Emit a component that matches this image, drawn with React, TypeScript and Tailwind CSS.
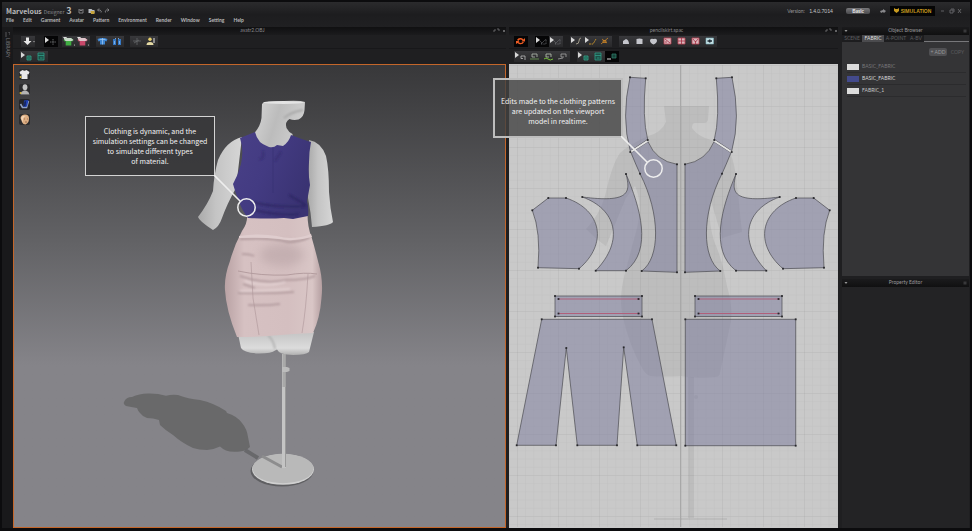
import type { ReactNode } from 'react'

const menus = ['File', 'Edit', 'Garment', 'Avatar', 'Pattern', 'Environment', 'Render', 'Window', 'Setting', 'Help']

const fabrics = [
  { name: 'BASIC_FABRIC', swatch: 'bg-[#dcdcdc]', text: 'text-[#77777a]' },
  { name: 'BASIC_FABRIC', swatch: 'bg-[#434a8c]', text: 'text-[#d4d4d6]' },
  { name: 'FABRIC_1', swatch: 'bg-[#dcdcdc]', text: 'text-[#c4c4c6]' },
]

const arrow = <path d="M1 1v6l4-3z" fill="#d8d8d8" />
const shirt = 'M4 2h1.500q1 1 2 0H9l2.500 2-1.200 1.500L9.300 5v4.500h-5.600V5l-1 .5L1.500 4z'

const icons: Record<string, ReactNode> = {
  down: <><path d="M5 1.500h3V5h2.500L6.500 9 2.500 5H5z" fill="#e8e8e8" /><path d="M12 5h2l-1 1.500z" fill="#999" /></>,
  move: <>{arrow}<path d="M9 3v6M6 6h6" stroke="#77797b" strokeWidth=".8" strokeDasharray="1.500 .7" /></>,
  greenShirt: <><path d="M1 1h4l-2 3z" fill="#ddd" /><path d={shirt} fill="#3fae42" /><path d="M2 3l2-1h5l2.500 2-2 1h-6z" fill="#c9d8c9" /><circle cx="12.500" cy="9" r=".6" fill="#ccc" /></>,
  redShirt: <><path d="M1 1h4l-2 3z" fill="#ddd" /><path d={shirt} fill="#c9486a" /><path d="M2 3l2-1h5l2.500 2-2 1h-6z" fill="#ddc5cb" /><circle cx="12.500" cy="9" r=".6" fill="#ccc" /></>,
  blueShirt: <><path d="M1.500 3l3-1h4l3 1-1 2.500-1.500-.5v3.500h-5V5L2.500 5.500z" fill="#3f86d2" /><path d="M6.500 2v6.500M3.500 3.500h6" stroke="#a5cdf4" strokeWidth=".7" /></>,
  bluePants: <><path d="M3 3h3v6H3zM8 3h3v6H8z" fill="#3578c4" /><path d="M5 2.500h1M8 2.500h1M4.500 5v3M9.500 5v3" stroke="#8fc0f2" strokeWidth=".8" /></>,
  stick: <path d="M3 5h8M7 2v7M4 7l5-3" stroke="#66686a" strokeWidth=".8" fill="none" />,
  avatar: <><circle cx="6" cy="3.200" r="1.700" fill="#e7cf6c" /><path d="M2.500 9q0-3 3.500-3t3.500 3z" fill="#e4d9a4" /><path d="M10 2v5" stroke="#e8e8e8" /></>,
  pinBox: <>{arrow}<path d="M7 5h4v4H7zM8 7h2" stroke="#35a58c" fill="#1d594d" strokeWidth=".8" /></>,
  meshBox: <path d="M4 2h6v7H4zM4 4.500h6M6 7h2.500" stroke="#2f9c86" fill="#1d4f47" strokeWidth=".8" />,
  edit: <>{arrow}<path d="M6 8l5-5v5zM5 5l2 2" stroke="#77797c" fill="none" strokeWidth=".7" strokeDasharray="1 .6" /></>,
  curve: <>{arrow}<path d="M6 8q3 0 3-3t2-3" stroke="#b9b19d" fill="none" strokeWidth=".8" /></>,
  point: <>{arrow}<path d="M5 8h4l3-5" stroke="#bb8a2c" fill="none" strokeWidth="1" strokeDasharray="2 .6" /></>,
  addPoint: <path d="M3 8l7-6M4 3l5 4M5 4.500h3v2H5z" stroke="#ca8427" fill="none" strokeWidth=".8" />,
  polygon: <path d="M4 8V5l3-2q3 1 3 5z" fill="#c5c6cc" />,
  rect: <path d="M3.500 3q3-1 6 0v5h-6z" fill="#c5c6cc" />,
  ellipse: <path d="M6.500 3q3.500-1 3.500 1.500T6.500 8.500Q3 7 3 4.500T6.500 3z" fill="#c5c6cc" />,
  dart: <><path d="M3 2h7v6H3z" fill="#d8b6bc" stroke="#bd4253" strokeWidth=".8" /><path d="M4 3l5 4M4 6h2" stroke="#a62e43" strokeWidth=".8" /></>,
  grid: <><path d="M3 2h7v6H3z" fill="#d8b6bc" stroke="#bd4253" strokeWidth=".8" /><path d="M6.500 2v6M3 5h7" stroke="#a62e43" strokeWidth=".8" /></>,
  cross: <><path d="M3 2h7v6H3z" fill="#d8b6bc" stroke="#bd4253" strokeWidth=".8" /><path d="M4 3l2.500 3L9 3M6.500 5v3" stroke="#a62e43" fill="none" strokeWidth=".8" /></>,
  eye: <><path d="M3 2h7.500v6H3z" fill="#c5e1e6" stroke="#7db0ba" strokeWidth=".6" /><path d="M4.500 5h4.500M6.700 3.500v3" stroke="#1d2a33" strokeWidth="1.600" /></>,
  sewSelect: <>{arrow}<path d="M7 5h4v4M7 5v2.500h2" stroke="#bbb" fill="none" strokeWidth=".8" /></>,
  sewGreen: <><path d="M4 3h5v3M4 3v3h3" stroke="#b5beb2" fill="none" strokeWidth=".8" /><path d="M2 8h9" stroke="#6da054" strokeWidth=".8" /></>,
  sewFree: <><path d="M4 3h5v3M4 3v3h3" stroke="#bcc7b6" fill="none" strokeWidth=".8" /><path d="M2 8q2-2 4 0t5 0" stroke="#75bf39" fill="none" /></>,
  sewOff: <path d="M5 3h5v3M5 3v3h3M2 8l5-1" stroke="#a5a5a5" fill="none" strokeWidth=".8" />,
  layer: <><path d="M2 8h4" stroke="#ddd" /><path d="M7 3h4v4H7z" stroke="#2d7868" fill="#164238" strokeWidth=".8" /></>,
  sync: <path d="M3 4q1-2.500 4-2 1.500.2 2.500 1.500L11 2v3.500H7.500l1-1Q6 2.500 4.500 5zM10 6q-1 2.500-4 2.200-1.500-.2-2.500-1.200L2 8V5h3.500l-1 1Q7 7.800 8.500 6z" fill="#ee5c24" />,
}

function Tool({ icon, label, active }: { icon: string; label: string; active?: boolean }) {
  return (
    <button
      aria-label={label}
      className={`h-[11px] w-[14px] shrink-0 ${active ? 'bg-[#050506]' : 'bg-linear-to-b from-[#38383b] to-[#29292b]'}`}
    >
      <svg viewBox="0 0 14 11" className="block h-full w-full">{icons[icon]}</svg>
    </button>
  )
}

function Group({ tools, active }: { tools: string[]; active?: string }) {
  return (
    <div className="flex">
      {tools.map((t) => (
        <Tool key={t} icon={t} label={t} active={t === active} />
      ))}
    </div>
  )
}

function PaneTitle({ children }: { children: ReactNode }) {
  return (
    <div className="flex h-[8px] items-center bg-linear-to-b from-[#101011] to-[#1b1b1d] text-[5px] text-[#8a8a8c]">
      <span className="flex-1 text-center">{children}</span>
      <svg viewBox="0 0 14 6" className="h-[6px] w-[14px]" fill="none" stroke="#77777a">
        <path d="M2 4V2h2M5 1h2v2M11 2l2 2M13 2l-2 2" strokeWidth=".8" />
      </svg>
    </div>
  )
}

function Callout({ className, children }: { className: string; children: ReactNode }) {
  return (
    <div className={`absolute z-20 flex h-[60px] w-[130px] items-center justify-center text-center font-['Noto_Sans_CJK_SC',sans-serif] text-[7px] leading-[10px] text-[#f4f4f4] ${className}`}>
      <p className="whitespace-nowrap">{children}</p>
      <svg viewBox="0 0 44 44" className="absolute top-full left-full h-[44px] w-[44px]" fill="none" stroke="#eeeeee">
        <path d="M0 0l26 26" strokeWidth="1.600" />
        <circle cx="32.500" cy="32.500" r="8.700" strokeWidth="1.500" />
      </svg>
    </div>
  )
}

function Mannequin() {
  return (
    <svg viewBox="14 65 491 462" className="absolute inset-0 h-full w-full" aria-label="Avatar">
      <defs>
        <linearGradient id="skin" x1="0" x2="1">
          <stop offset="0" stopColor="#aaaaaa" />
          <stop offset=".4" stopColor="#c4c4c4" />
          <stop offset="1" stopColor="#d6d6d6" />
        </linearGradient>
        <linearGradient id="neck" x1="0" x2="1" y2=".3">
          <stop offset="0" stopColor="#d6d6d6" />
          <stop offset=".5" stopColor="#bcbcbc" />
          <stop offset="1" stopColor="#cecece" />
        </linearGradient>
        <linearGradient id="top" x1="0" x2="1" y2=".5">
          <stop offset="0" stopColor="#494087" />
          <stop offset=".5" stopColor="#433b82" />
          <stop offset="1" stopColor="#3a3373" />
        </linearGradient>
        <linearGradient id="skirt" x1="0" x2="1">
          <stop offset="0" stopColor="#b9a2a4" />
          <stop offset=".2" stopColor="#d6c1c2" />
          <stop offset=".65" stopColor="#d4bfc0" />
          <stop offset=".9" stopColor="#d9c6c6" />
          <stop offset="1" stopColor="#b59fa1" />
        </linearGradient>
        <linearGradient id="leg" x1="0" x2="0" y1="0" y2="1">
          <stop offset="0" stopColor="#c4c4c4" />
          <stop offset=".7" stopColor="#dcdcdc" />
          <stop offset="1" stopColor="#b0b0b0" />
        </linearGradient>
        <filter id="soft" x="-20%" y="-50%" width="140%" height="200%">
          <feGaussianBlur stdDeviation="1" />
        </filter>
        <filter id="softer" x="-50%" y="-50%" width="200%" height="200%">
          <feGaussianBlur stdDeviation="5" />
        </filter>
      </defs>

      {/* floor shadow */}
      <path fill="#69696a" d="M124 402q2-5 8-5 8-4 18-3.500 8 0 16 2.200 6-1.500 12-.7 10 4 22 5 14 3 26 11l1 2q10 3 15 10 5 6 6 14l2 10q-4 4-10 4.500-9 1-14-1-4-2-6-4-6 3-13 3.500-8 0-14-2-11-5-20-13-8-5-13-10l-1-5q-6-2-12-2-5-2-7-5-2-2-3-5-6-1-11-2-3-2-2-4z" />
      <ellipse cx="282" cy="471" rx="31.500" ry="15.500" fill="#5f5f62" />
      <path d="M245 450l13 8" stroke="#68686b" strokeWidth="4" />
      <ellipse cx="283" cy="469.500" rx="31" ry="15.300" fill="#d0d0d0" />
      <ellipse cx="283" cy="468.500" rx="30.500" ry="14.700" fill="#b9b9b9" />
      <path d="M262 456l20 11" stroke="#8d8d8e" strokeWidth="3" />
      <path d="M284 354v114" stroke="#c4c4c4" strokeWidth="4" />
      <path d="M285.500 354v113" stroke="#999" strokeWidth="1" />
      <path d="M284 354v33" stroke="#a9a9a9" strokeWidth="3" />
      <path d="M282 367h5l2.500 1v3l-2.500 1h-5z" fill="#bcbcbc" />

      {/* legs */}
      <path fill="url(#leg)" d="M238 334l3 14q3 5 18 5.500 13 0 16-3l2-1q2 5 16 5.500 13 0 16-3l5-20z" />
      <path d="M268 335q6 6 7 14" stroke="#aaa" fill="none" strokeWidth="1.500" filter="url(#soft)" />

      {/* arms and neck */}
      <path fill="url(#skin)" d="M242 137q-16 4-24 23-4 14-5 31-5 13-15 26 1 4 15 13 6-3 9-12 5-14 14-30z" />
      <path fill="url(#skin)" d="M309 140q12 2 17 16 3 13 3 36 1 16 4 30-3 4-21 5-1-14-4-29z" />
      <path fill="url(#neck)" d="M262 104q2-3 22-3 16-1 21 1l-.5 8q-.5 7-6 9.500-5 1-9-.5-5 3-3 9 2 4 6 6v15h-36l-2-16q6-7 7-15z" />
      <ellipse cx="283.500" cy="102.500" rx="20.500" ry="1.500" fill="#e4e4e4" />
      <path d="M284 118q7-6 19-8" stroke="#a8a8a8" strokeWidth="2" fill="none" filter="url(#soft)" />

      {/* skirt */}
      <path fill="url(#skirt)" d="M247 214q1 9-5 17-8 15-12 30-6 16-5 29 1 20 12 47 20 0 37-1.500 20-2 39-2.500 7-15 8.500-35 2-18-3-35-4-16-7-26-4-10-4-23z" />
      <ellipse cx="282" cy="255" rx="22" ry="11" fill="#a08b8f" opacity=".3" filter="url(#softer)" />
      <g filter="url(#soft)" fill="none">
        <path d="M240 239q32-2 48 3 12 0 22-5" stroke="#a58f92" strokeWidth="1.500" />
        <path d="M240 276q25 9 46 4 20 0 29-4M243 284l12 4M238 293q30 1 56-1M248 305q16 1 32-1M242 254q8 0 12 2" stroke="#9d8689" strokeWidth="1.500" opacity=".75" />
        <path d="M245 281q20 7 40 1M240 291q24 0 50-2" stroke="#e6d5d6" strokeWidth="1.500" />
      </g>
      <path d="M239 236q20-3 38 0 16 5 34-2l1 3q-18 5-33 2-18-2-40-1z" fill="#dfcdce" />
      <path d="M238 271q23 5 49 4 18-3 30-1" fill="none" stroke="#ab9396" strokeWidth=".8" />
      <path d="M251 262l2 36 6 37M308 274q-2 36-6 59" fill="none" stroke="#ad9699" strokeWidth=".6" />

      {/* top */}
      <path fill="url(#top)" d="M255 132l-15 6q4 12 1 26-3 11-8 20 2 8 6 17 2 8 9 17 20 1 36 0l9 1 15-3q1-7-1-15l3-16q-2-12-1-23 0-10 2-20-10-3-20-7-2 7-8 11l-6-1q-3 3-8 2-7-3-9-5-4-5-5-10z" />
      <g filter="url(#soft)" fill="none" stroke="#2b2560" strokeWidth="1.500">
        <path d="M252 202q22 6 54 4M254 210q25 6 45 4M289 195l17 10" />
        <path d="M263 151q2 9-4 8M281 152l-6 9" opacity=".6" />
      </g>
      <path d="M273 148v45" stroke="#373073" strokeWidth=".7" />
    </svg>
  )
}

const pieces = [
  'M630 77.300L645.700 78.300Q642 118 647.700 139.500L630.300 151Q621 118 630 77.300z',
  'M648 141.700Q656 161 677 164.300V272.300L641.700 271C660 258 661 215 640 173.700Q636 165 631 152.700z',
  'M626 174C631 193 629 203 582.300 197C616 209 625 240 595.700 270.700H626C653 250 640 207 626 174z',
  'M548.300 198H566C602 210 608 244 579 268.700L538 267.700Q541 232 532.300 210.300z',
]

const points = [
  [630, 77.3], [645.7, 78.3], [647.7, 140], [630.3, 152], [677, 164.3], [677, 272.3], [641.7, 271], [640, 173.7],
  [626, 174], [582.3, 197], [595.7, 270.7], [626, 270.7], [548.3, 198], [566, 198], [579, 268.7], [538, 267.7], [532.3, 210.3],
]

const skirtPoints = [
  [541.7, 319.3], [652, 319.3], [676.3, 445.3], [637.3, 445.3], [623.7, 347.3], [617, 445.3], [577.3, 445.3], [566.3, 348],
  [556, 445.3], [516.7, 445.3], [685.3, 319.3], [795.7, 319.3], [685.3, 445.7], [795.7, 445.7],
]

function Dots({ at }: { at: number[][] }) {
  return (
    <g fill="#27272b" fillOpacity="1" stroke="none">
      {at.map(([x, y]) => <rect key={`${x}-${y}`} x={x - 0.9} y={y - 0.9} width="1.800" height="1.800" />)}
    </g>
  )
}

function Waistband({ x }: { x: number }) {
  return (
    <>
      <path d={`M${x} 296h87v20.500h-87z`} />
      <path d={`M${x + 3} 299h82M${x + 3} 313.500h82`} stroke="#b0607a" strokeWidth="1" />
      <Dots at={[[x, 296], [x + 87, 296], [x, 316.5], [x + 87, 316.5], [x + 3.5, 299], [x + 83.5, 299], [x + 3.5, 313.5], [x + 83.5, 313.5]]} />
    </>
  )
}

function Half() {
  return (
    <>
      {pieces.map((d) => <path key={d} d={d} />)}
      <path d="M630.500 152l17-11" stroke="#e4e4e4" strokeWidth="1.500" />
      <Dots at={points} />
    </>
  )
}

function Patterns() {
  return (
    <svg viewBox="509 65 329 462" className="absolute inset-0 h-full w-full" aria-label="Pattern pieces">
      <defs>
        <pattern id="minor" x="681" y="65" width="8.200" height="8.200" patternUnits="userSpaceOnUse">
          <path d="M0 0v8.200M0 0h8.200" stroke="#000" strokeOpacity=".04" />
        </pattern>
        <pattern id="major" x="681" y="65" width="41" height="41" patternUnits="userSpaceOnUse">
          <path d="M0 0v41M0 0h41" stroke="#000" strokeOpacity=".05" />
        </pattern>
      </defs>
      {/* avatar silhouette behind the pieces */}
      <g fill="#000" fillOpacity=".06">
        <path d="M664 106h45l-1 14q-1 3-4 3h-9q-3 0-3 5 4 6 13 10 20 6 25 15 5 10 7 32l5 47-20 6-11-37q-4 15 3 40 9 20 13 45 7 24 3 40l-10 47q0 3-4 4-20 2-35-1-18 1-31 0-5-2-8-8-14-25-20-55-3-18 3-40l12-45q6-25-2-42l-9 12-20 48q-8-5-20-17 13-13 19-33 7-32 15-43 10-9 28-17 13-3 18-14z" />
        <path d="M688 377h6v141h-6zM654 518h73v2h-73z" />
        <circle cx="696" cy="397" r="2" />
      </g>
      <rect x="509" y="65" width="329" height="462" fill="url(#minor)" />
      <rect x="509" y="65" width="329" height="462" fill="url(#major)" />
      <path d="M680.500 65v462" stroke="#a8a8a8" strokeWidth="1" />
      <g fill="#7c7c9e" fillOpacity=".52" stroke="#4a4a50" strokeWidth=".7">
        <Half />
        <g transform="matrix(-1 0 0 1 1362 0)"><Half /></g>
        <Waistband x={555} />
        <Waistband x={695} />
        <path d="M541.700 319.300H652L676.300 445.300H637.300L623.700 347.300 617 445.300H577.300L566.300 348 556 445.300H516.700zM685.300 319.300H795.700V445.700H685.300z" />
        <Dots at={skirtPoints} />
      </g>
    </svg>
  )
}

function PanelHeader({ children }: { children: ReactNode }) {
  return (
    <h2 className="flex h-[8px] items-center bg-linear-to-b from-[#1b1b1d] to-[#101011] px-[2px] text-[5px] text-[#98989a]">
      <svg viewBox="0 0 4 4" className="h-[4px] w-[4px]"><path d="M.5 1h3L2 3z" fill="#999" /></svg>
      <span className="flex-1 text-center">{children}</span>
      <svg viewBox="0 0 4 4" className="h-[4px] w-[4px]"><path d="M.5.5h3v3h-3z" fill="#38383a" /></svg>
    </h2>
  )
}

function ViewModes() {
  return (
    <div className="relative z-10 ml-[5px] flex w-[11px] flex-col gap-[4px] pt-[4px]">
      <button aria-label="Show garment" className="h-[11px] w-[11px] rounded-xs bg-[#2b2b2d]">
        <svg viewBox="0 0 11 11"><path d="M3.500 1q2 1.500 4 0L10.500 3 9.500 5.500 8.500 5v5h-6V5l-1 .5L.5 3z" fill="#e8e8e8" /><circle cx="1.500" cy="8" r="1" fill="#d9ba3a" /></svg>
      </button>
      <button aria-label="Show avatar" className="h-[11px] w-[11px] rounded-xs bg-[#2b2b2d]">
        <svg viewBox="0 0 11 11"><ellipse cx="6" cy="3.200" rx="2.400" ry="3" fill="#c5c5c5" /><path d="M1.500 10.500q0-3 3.500-4h2q3 1 3.500 4z" fill="#b4b4b4" /><circle cx="1.500" cy="9" r="1" fill="#d9ba3a" /></svg>
      </button>
      <button aria-label="Garment texture" className="h-[11px] w-[11px] rounded-xs bg-[#252528]">
        <svg viewBox="0 0 11 11"><path d="M1.500 5l2 3.500h4L9.500 2" fill="none" stroke="#8fa0c4" strokeWidth="1.600" /><path d="M5 1.500l4.500-.5-1.500 6.500-3.500.5z" fill="#1f3fb4" /><path d="M5.500 2.500L5 7l1.500-.3.500-4.400z" fill="#15234f" /></svg>
      </button>
      <button aria-label="Avatar texture" className="h-[11px] w-[11px] rounded-xs bg-[#2b2b2d]">
        <svg viewBox="0 0 11 11"><path d="M1.500 4Q2 .5 6 .5T10 4.500Q10 9 6.500 10.500 4 10.500 3 8z" fill="#ddae83" /><path d="M2 4q1-3 5-2Q3 3 4 9z" fill="#f2d5b7" /><path d="M5 5h1M8 5h1M6 8h2" stroke="#83573c" strokeWidth=".7" /></svg>
      </button>
    </div>
  )
}

export default function App() {
  return (
    <div className="flex min-h-screen flex-col border-x-2 border-t-2 border-b-[3px] border-[#0c0c0e] bg-[#1f1f21] font-['Lato',sans-serif] text-[#c8c8ca]">
      <header className="h-[25px] bg-linear-to-b from-[#2b2b2d] via-[#1d1d1f] to-[#202022] px-[4px] pt-[3px]">
        <div className="flex h-[11px] items-center">
          <h1 className="flex items-baseline gap-[2px] font-['Noto_Sans_CJK_SC',sans-serif] text-[7px] leading-[11px] font-bold text-[#b9b9bb]">
            Marvelous <span className="text-[5px] font-normal text-[#8b8b8d]">Designer</span> <span className="text-[9px]">3</span>
          </h1>
          <svg viewBox="0 0 32 8" className="ml-[6px] h-[8px] w-[32px]" fill="none" stroke="#929295" strokeWidth=".8">
            <path d="M1 2v4h4V2M2 2v1.500h2V2" />
            <path d="M10.500 2h3l1 1h2v3h-6z" fill="#b9bdc2" stroke="none" />
            <path d="M12.500 4h4v3h-3.500z" fill="#c6a43a" stroke="none" />
            <path d="M21 1.500l-1.500 1.500L21 4.500M20 3h2q2 1 1 2.500M29.500 1.500L31 3l-1.500 1.500M30.500 3h-2q-2 1-1 2.500" />
          </svg>
          <div className="ml-auto flex items-center leading-[10px]">
            <span className="mr-[13px] text-[5px]"><span className="mr-[3px] text-[#99999b]">Version:</span> 1.4.0.7014</span>
            <button className="h-[6px] w-[24px] rounded-xs bg-linear-to-b from-[#77777a] to-[#4a4a4d] text-[5px] leading-[6px] font-bold text-[#eeeeee]">Basic</button>
            <svg viewBox="0 0 6 6" className="mr-[4px] ml-[10px] h-[6px] w-[6px]"><path d="M0 3l3-1V1l3 2-2 2-1-1-2 1z" fill="#88888b" /></svg>
            <button className="flex h-[10px] w-[45px] items-center justify-center gap-[2px] bg-[#050505] font-['Liberation_Sans',sans-serif] text-[5px] font-bold text-[#c79a1f]">
              <svg viewBox="0 0 5 5" className="h-[5px] w-[5px]"><path d="M0 0l1.500 1h2L5 0v3L2.500 5 0 3z" fill="#c79a1f" /></svg>
              SIMULATION
            </button>
            <svg viewBox="0 0 26 6" className="ml-[5px] h-[6px] w-[26px]" fill="none" stroke="#68686b">
              <path d="M1 3h3M10 2h3v3h-3zM11 1h3v3M18 1l3 4M21 1l-3 4" strokeWidth=".9" />
            </svg>
          </div>
        </div>
        <nav className="flex h-[9px] items-center gap-[9px] text-[5px] font-bold text-[#b8b8ba]">
          {menus.map((m) => <a key={m} href="#">{m}</a>)}
        </nav>
      </header>

      <main className="flex flex-1">
        <aside className="flex w-[11px] shrink-0 flex-col items-center bg-[#19191b] pt-[5px]">
          <svg viewBox="0 0 5 6" className="h-[6px] w-[5px]"><path d="M1 0v5M3 0h2v3" stroke="#666669" fill="none" strokeWidth=".8" /></svg>
          <span className="text-[5px] leading-[8px] text-[#77777a] [writing-mode:vertical-rl]">LIBRARY</span>
        </aside>

        <section className="flex min-w-0 flex-[493_1_0%] flex-col">
          <PaneTitle>avatr2.OBJ</PaneTitle>
          <div className="flex h-[14px] items-center gap-[6px] border-b border-[#18181a] pl-[8px]">
            <Tool icon="down" label="Drop arrangement" />
            <div className="flex gap-[4px] pl-[3px]">
              <Tool icon="move" label="Select and move" active />
              <Group tools={['greenShirt', 'redShirt']} />
            </div>
            <Group tools={['blueShirt', 'bluePants']} />
            <Group tools={['stick', 'avatar']} />
          </div>
          <div className="flex h-[15px] items-center pl-[7px]">
            <Group tools={['pinBox', 'meshBox']} />
          </div>
          <div className="relative flex-1 border border-[#c4662a] bg-linear-to-b from-[#38383a] via-[#626265] via-38% to-[#858489] to-65%">
            <Mannequin />
            <ViewModes />
            <Callout className="top-[51px] left-[71px] border border-[#d4d4d4] bg-[#37373a]/90">
              Clothing is dynamic, and the<br />simulation settings can be changed<br />to simulate different types<br />of material.
            </Callout>
          </div>
        </section>

        <section className="ml-[3px] flex min-w-0 flex-[329_1_0%] flex-col">
          <PaneTitle>pencilskirt.spac</PaneTitle>
          <div className="flex h-[14px] items-center gap-[7px] border-b border-[#18181a] pl-[5px]">
            <Tool icon="sync" label="Synchronize" active />
            <div className="flex">
              <Tool icon="edit" label="Edit pattern" active />
              <Tool icon="edit" label="Transform pattern" />
            </div>
            <Group tools={['curve', 'point', 'addPoint']} />
            <Group tools={['polygon', 'rect', 'ellipse', 'dart', 'grid', 'cross', 'eye']} />
          </div>
          <div className="flex h-[15px] items-center gap-[7px] pl-[5px]">
            <Group tools={['sewSelect', 'sewGreen', 'sewFree', 'sewOff']} />
            <Group tools={['pinBox', 'meshBox', 'layer']} active="layer" />
          </div>
          <div className="relative flex-1 bg-[#c9c9c9]">
            <Patterns />
            <Callout className="top-[14px] left-[-16px] border-2 border-[#bdbdbd] bg-[#424242]/80 pt-[6px]">
              Edits made to the clothing patterns<br />are updated on the viewport<br />model in realtime.
            </Callout>
          </div>
        </section>

        <aside className="mr-[1px] ml-[4px] flex w-[127px] shrink-0 flex-col">
          <section className="flex h-[249px] flex-col bg-[#343436]">
            <PanelHeader>Object Browser</PanelHeader>
            <div className="flex h-[7px] items-stretch bg-[#1d1d1f] text-[5px] leading-[7px] text-[#5d5d60]">
              <button className="w-[20px]">SCENE</button>
              <button className="w-[22px] bg-[#4b4b4e] text-[#dddddd]">FABRIC</button>
              <button className="w-[24px]">A-POINT</button>
              <button className="w-[16px]">A-BV</button>
              <span className="flex-1 border-b border-[#77777a] bg-[#2b2b2d]" />
            </div>
            <div className="flex justify-end gap-[2px] pt-[6px] pr-[3px] text-[5px] leading-[8px] whitespace-nowrap">
              <button className="h-[8px] w-[18px] rounded-xs bg-[#505053] text-[#99999c]">+ ADD</button>
              <button className="h-[8px] w-[17px] text-[#5d5d60]">COPY</button>
            </div>
            <ul className="pt-[5px]">
              {fabrics.map((f, i) => (
                <li key={i} className="mr-[3px] ml-[5px] flex h-[12px] items-center gap-[3px] border-b border-[#2b2b2d] text-[5px]">
                  <span className={`h-[6px] w-[12px] ${f.swatch}`} />
                  <span className={f.text}>{f.name}</span>
                </li>
              ))}
            </ul>
          </section>
          <section className="mt-[3px] flex-1 bg-[#232325]">
            <PanelHeader>Property Editor</PanelHeader>
          </section>
        </aside>
      </main>
    </div>
  )
}
